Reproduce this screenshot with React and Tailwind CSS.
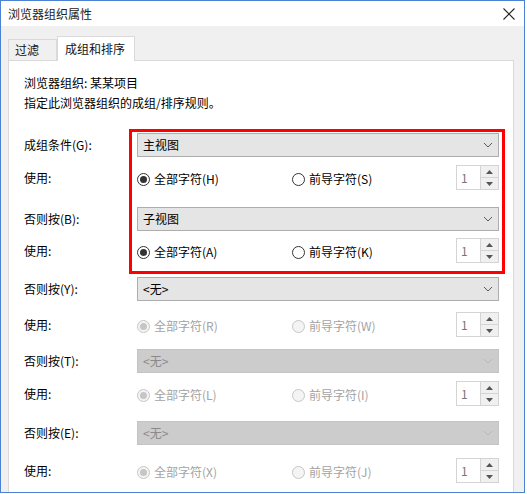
import React from 'react';

const Chevron = ({ disabled }) => (
    <svg width="10" height="6" viewBox="0 0 10 6" className="shrink-0">
        <path d="M1 1 L5 5 L9 1" fill="none" stroke={disabled ? '#b8b8b8' : '#5a5a5a'} strokeWidth="1" />
    </svg>
);

const Select = ({ value, disabled }) => (
    <div
        className={`flex-1 h-[24px] flex items-center justify-between pl-[5px] pr-[5px] border ${
            disabled ? 'bg-[#cccccc] border-[#c4c4c4] text-[#8a8a8a]' : 'bg-[#e5e5e5] border-[#adadad] text-[#000]'
        }`}
    >
        <span>{value}</span>
        <Chevron disabled={disabled} />
    </div>
);

const Radio = ({ checked, disabled, label }) => (
    <div className={`flex items-center gap-[4px] ${disabled ? 'text-[#a3a3a3]' : 'text-[#000]'}`}>
        <span
            className={`w-[13px] h-[13px] rounded-full border flex items-center justify-center ${
                disabled ? 'border-[#c6c6c6] bg-[#f4f4f4]' : 'border-[#333333] bg-white'
            }`}
        >
            {checked && (
                <span className={`w-[7px] h-[7px] rounded-full ${disabled ? 'bg-[#c6c6c6]' : 'bg-[#333333]'}`} />
            )}
        </span>
        <span>{label}</span>
    </div>
);

const Spinner = () => (
    <div className="w-[43px] h-[25px] flex border border-[#d4d4d4] bg-white">
        <div className="flex-1 pl-[4px] text-[#777] leading-[23px]">1</div>
        <div className="w-[18px] flex flex-col border-l border-[#d4d4d4] bg-[#f0f0f0]">
            <div className="flex-1 flex items-center justify-center border-b border-[#d4d4d4]">
                <svg width="7" height="4" viewBox="0 0 7 4">
                    <path d="M0 4 L3.5 0 L7 4 Z" fill="#555" />
                </svg>
            </div>
            <div className="flex-1 flex items-center justify-center">
                <svg width="7" height="4" viewBox="0 0 7 4">
                    <path d="M0 0 L3.5 4 L7 0 Z" fill="#555" />
                </svg>
            </div>
        </div>
    </div>
);

const Group = ({ label, value, selectDisabled, radioDisabled, all, lead, mtSelect, mtUse }) => (
    <>
        <div className={`flex items-center h-[24px] ${mtSelect}`}>
            <div className="w-[113px] shrink-0">{label}</div>
            <Select value={value} disabled={selectDisabled} />
        </div>
        <div className={`flex items-center h-[25px] ${mtUse}`}>
            <div className="w-[113px] shrink-0">使用:</div>
            <div className="flex-1 flex items-center pt-[3px]">
                <div className="w-[155px]">
                    <Radio checked disabled={radioDisabled} label={all} />
                </div>
                <Radio disabled={radioDisabled} label={lead} />
            </div>
            <Spinner />
        </div>
    </>
);

export default function App() {
    return (
        <div className="w-[527px] h-[494px] bg-white relative overflow-hidden text-[12px] leading-[16px] text-[#000] font-['Noto_Sans_CJK_SC','Noto_Sans',sans-serif]">
            <div className="w-[525px] h-[493px] border border-[#4c82d6] flex flex-col">
                <div className="h-[25px] bg-white flex items-center justify-between pl-[7px] pr-[9px]">
                    <span className="text-[#222]">浏览器组织属性</span>
                    <svg width="12" height="12" viewBox="0 0 12 12">
                        <path d="M0.5 0.5 L11.5 11.5 M11.5 0.5 L0.5 11.5" stroke="#222" strokeWidth="1.1" />
                    </svg>
                </div>
                <div className="flex-1 bg-[#f0f0f0] pl-[7px] pr-[10px] pt-[10px] flex flex-col">
                    <div className="flex items-end h-[24px] relative z-10">
                        <div className="w-[49px] h-[21px] border border-b-0 border-[#d9d9d9] bg-[#f0f0f0] pl-[6px] leading-[20px] text-[#111]">
                            过滤
                        </div>
                        <div className="w-[78px] h-[25px] -mb-[1px] border border-b-0 border-[#d9d9d9] bg-white pl-[7px] leading-[23px] text-[#111]">
                            成组和排序
                        </div>
                    </div>
                    <div className="flex-1 bg-white border border-[#d9d9d9] border-b-0 pl-[15px] pr-[14px] pt-[12px] flex flex-col">
                        <div className="leading-[20px]">浏览器组织: 某某项目</div>
                        <div className="leading-[20px]">指定此浏览器组织的成组/排序规则。</div>
                        <Group
                            label="成组条件(G):"
                            value="主视图"
                            all="全部字符(H)"
                            lead="前导字符(S)"
                            mtSelect="mt-[20px]"
                            mtUse="mt-[8px]"
                        />
                        <Group
                            label="否则按(B):"
                            value="子视图"
                            all="全部字符(A)"
                            lead="前导字符(K)"
                            mtSelect="mt-[17px]"
                            mtUse="mt-[7px]"
                        />
                        <Group
                            label="否则按(Y):"
                            value="<无>"
                            radioDisabled
                            all="全部字符(R)"
                            lead="前导字符(W)"
                            mtSelect="mt-[14px]"
                            mtUse="mt-[11px]"
                        />
                        <Group
                            label="否则按(T):"
                            value="<无>"
                            selectDisabled
                            radioDisabled
                            all="全部字符(L)"
                            lead="前导字符(I)"
                            mtSelect="mt-[12px]"
                            mtUse="mt-[8px]"
                        />
                        <Group
                            label="否则按(E):"
                            value="<无>"
                            selectDisabled
                            radioDisabled
                            all="全部字符(X)"
                            lead="前导字符(J)"
                            mtSelect="mt-[15px]"
                            mtUse="mt-[13px]"
                        />
                    </div>
                </div>
            </div>
            <div className="absolute left-[129px] top-[129px] w-[376px] h-[145px] border-[3px] border-[#ff0000] pointer-events-none" />
        </div>
    );
}
